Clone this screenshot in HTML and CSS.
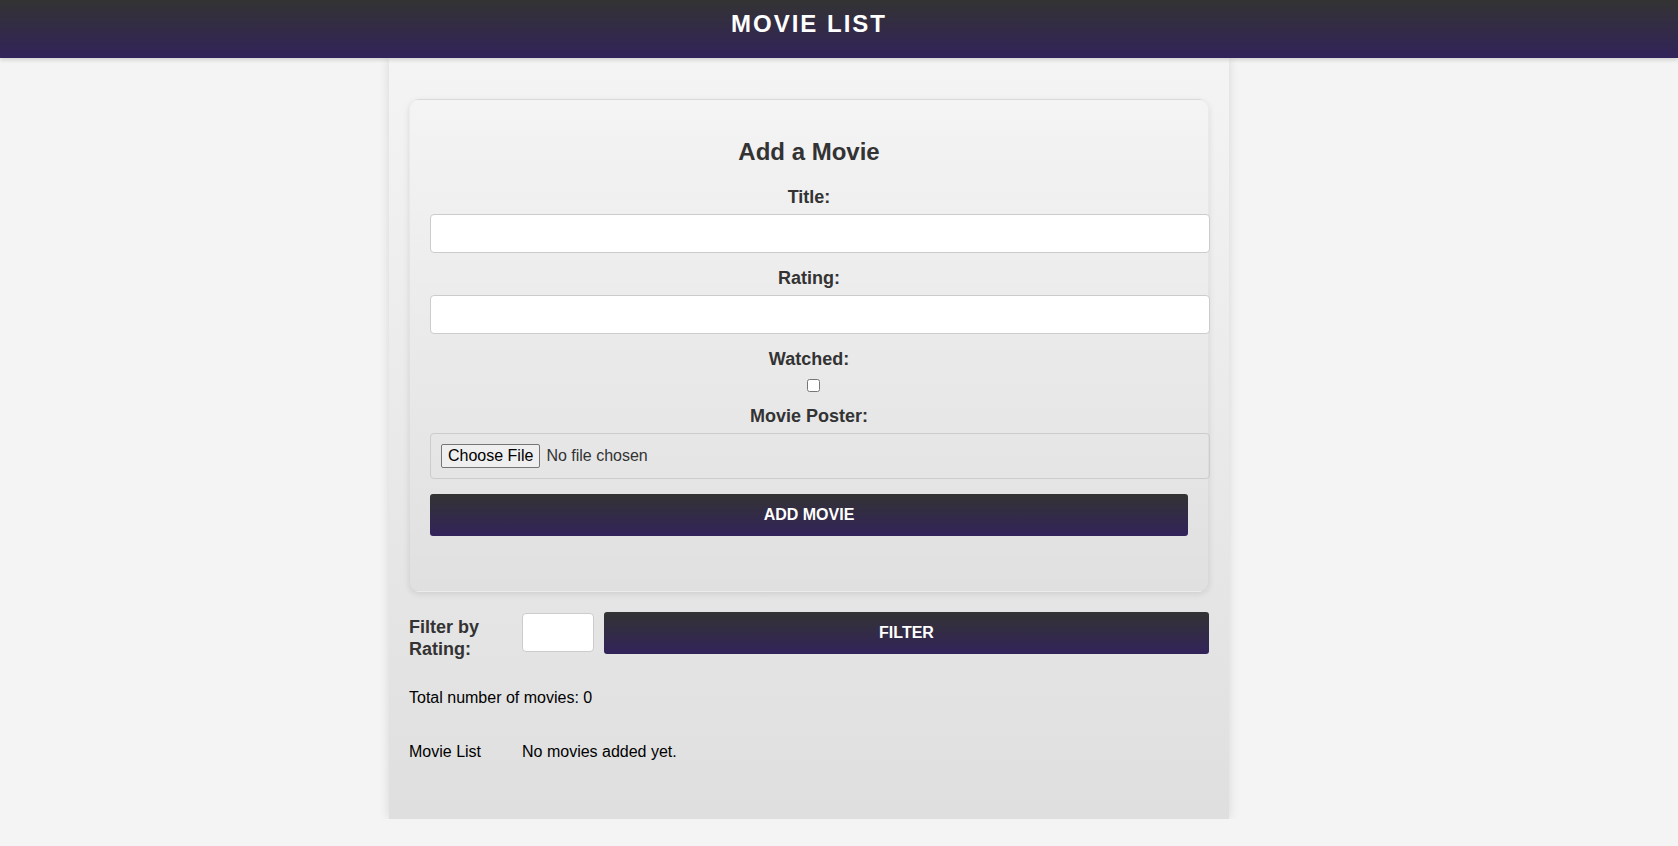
FILE: index.html
```html
<!DOCTYPE html>
<html lang="en">
<head>
<meta charset="utf-8">
<title>Movie List</title>
<link rel="stylesheet" href="styles.css">
</head>
<body>
<header class="site-header">
  <h1 class="site-title">MOVIE LIST</h1>
</header>
<main class="page">
  <div class="container">
    <section class="card">
      <h2 class="card-title">Add a Movie</h2>
      <form class="movie-form">
        <label class="field-label" for="title">Title:</label>
        <input class="text-input" type="text" id="title">
        <label class="field-label" for="rating">Rating:</label>
        <input class="text-input" type="text" id="rating">
        <label class="field-label" for="watched">Watched:</label>
        <input class="check" type="checkbox" id="watched">
        <label class="field-label" for="poster">Movie Poster:</label>
        <div class="file-box" id="poster">
          <button type="button" class="file-btn">Choose File</button>
          <span class="file-name">No file chosen</span>
        </div>
        <button type="button" class="primary-btn add-btn">ADD MOVIE</button>
      </form>
    </section>
    <div class="filter-row">
      <label class="filter-label" for="filter">Filter by Rating:</label>
      <input class="filter-input" type="text" id="filter">
      <button type="button" class="primary-btn filter-btn">FILTER</button>
    </div>
    <p class="total">Total number of movies: 0</p>
    <div class="list-row">
      <span class="list-title">Movie List</span>
      <span class="list-empty">No movies added yet.</span>
    </div>
  </div>
</main>
</body>
</html>
```

FILE: styles.css
```css
* { box-sizing: border-box; }
html, body { margin: 0; padding: 0; }
body {
  background: #f4f4f4;
  font-family: "Liberation Sans", Arial, sans-serif;
  color: #000;
}
.site-header {
  background: linear-gradient(to bottom, #333333, #32235a);
  padding: 10px 60px 20px 0;
  box-shadow: 0 2px 4px rgba(0,0,0,0.15);
  position: relative;
  z-index: 1;
}
.site-title {
  margin: 0;
  text-align: center;
  color: #fff;
  font-size: 24px;
  line-height: 28px;
  font-weight: bold;
  letter-spacing: 2px;
}
.page {
  padding-right: 60px;
}
.container {
  width: 840px;
  margin: 0 auto;
  padding: 41px 20px 20px;
  background: linear-gradient(to bottom, #f4f4f4, #dfdfdf);
  box-shadow: 0 0 10px rgba(0,0,0,0.12);
}
.card {
  border: 1px solid rgba(0,0,0,0.03);
  border-radius: 10px;
  padding: 20px;
  background: linear-gradient(to bottom, #f4f4f4, #e0e0e0);
  box-shadow: 0 2px 6px rgba(0,0,0,0.1);
}
.card-title {
  margin: 18px 0 21px;
  text-align: center;
  font-size: 24px;
  font-weight: bold;
  color: #333;
}
.movie-form { display: block; }
.field-label {
  display: block;
  text-align: center;
  font-size: 18px;
  line-height: 21px;
  font-weight: bold;
  color: #333;
  margin-bottom: 6px;
}
.text-input {
  display: block;
  box-sizing: content-box;
  width: 100%;
  height: 17px;
  padding: 10px;
  margin: 0 0 15px;
  border: 1px solid #ccc;
  border-radius: 4px;
  background: #fff;
  font-family: inherit;
  font-size: 16px;
}
.check {
  display: block;
  width: 13px;
  height: 13px;
  margin: 9px 0 14px calc(50% - 2px);
}
.file-box {
  display: flex;
  align-items: center;
  gap: 6px;
  box-sizing: content-box;
  width: 100%;
  height: 23px;
  padding: 10px 10px 11px;
  margin-bottom: 15px;
  border: 1px solid #ccc;
  border-radius: 4px;
}
.file-btn {
  height: 24px;
  padding: 0 6px;
  margin-top: 1px;
  background: #efefef;
  border: 1px solid #767676;
  border-radius: 2px;
  font-family: inherit;
  font-size: 16px;
  color: #000;
}
.file-name {
  font-size: 16px;
  color: #333;
  margin-top: 1px;
}
.primary-btn {
  display: block;
  height: 42px;
  border: none;
  border-radius: 3px;
  background: linear-gradient(to bottom, #333333, #32235a);
  color: #fff;
  font-family: inherit;
  font-size: 16px;
  font-weight: bold;
}
.add-btn {
  width: 100%;
  margin: 2px 0 35px;
}
.filter-row {
  display: flex;
  align-items: flex-start;
  gap: 10px;
  margin-top: 20px;
}
.filter-label {
  flex: 0 0 103px;
  margin-top: 5px;
  font-size: 18px;
  line-height: 21.6px;
  font-weight: bold;
  color: #333;
}
.filter-input {
  flex: 0 0 72px;
  width: 72px;
  min-width: 0;
  height: 39px;
  margin-top: 1px;
  padding: 10px;
  border: 1px solid #ccc;
  border-radius: 4px;
  background: #fff;
  font-family: inherit;
  font-size: 16px;
}
.filter-btn {
  flex: 1;
}
.total {
  margin: 29px 0 16px;
  font-size: 16px;
}
.list-row {
  display: flex;
  margin: 36px 0 38px;
  font-size: 16px;
}
.list-title {
  flex: 0 0 113px;
}
```
